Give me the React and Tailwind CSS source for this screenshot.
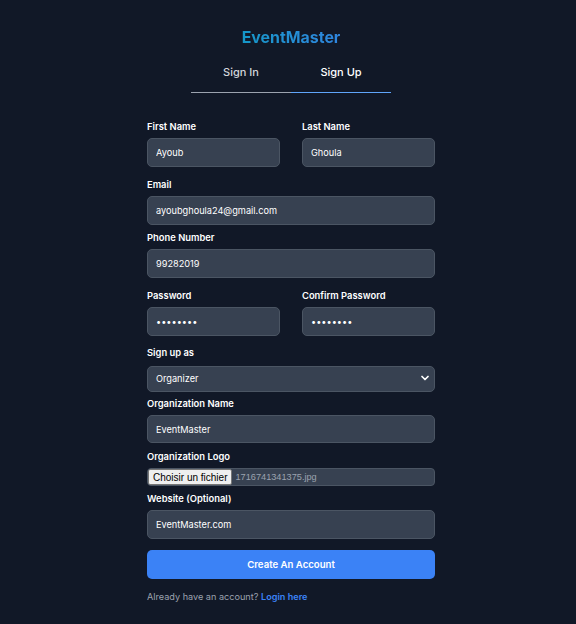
import { ChevronDown } from "lucide-react";

function Label({ children }) {
  return (
    <label className="block text-[9.4px] leading-[12px] font-semibold text-white mb-[5px]">
      {children}
    </label>
  );
}

function Field({ label, value, type = "text", className = "" }) {
  return (
    <div className={className}>
      <Label>{label}</Label>
      <input
        type={type}
        defaultValue={value}
        className="w-full h-[29px] px-[8px] rounded-[5px] bg-[#374151] border border-[#4b5563] text-white text-[9.2px] outline-none"
      />
    </div>
  );
}

export default function App() {
  return (
    <div className="min-h-screen bg-[#111827] font-['Inter',sans-serif] flex justify-center pl-[6px]">
      <div className="w-[288px] flex flex-col items-center pt-[28px]">
        <h1 className="text-[15.9px] leading-[20px] font-bold bg-gradient-to-r from-[#1497c8] to-[#2f86e0] bg-clip-text text-transparent">
          EventMaster
        </h1>

        {/* tabs */}
        <div className="flex w-[200px] mt-[16px]">
          <button className="w-1/2 text-center text-[11px] leading-[16px] font-medium text-[#d1d5db] pb-[12px] border-b border-[#9ca3af]">
            Sign In
          </button>
          <button className="w-1/2 text-center text-[11px] leading-[16px] font-medium text-white pb-[12px] border-b border-[#60a5fa]">
            Sign Up
          </button>
        </div>

        <form className="w-full mt-[28px]" onSubmit={(e) => e.preventDefault()}>
          <div className="grid grid-cols-2 gap-x-[22px]">
            <Field label="First Name" value="Ayoub" />
            <Field label="Last Name" value="Ghoula" />
          </div>

          <Field label="Email" value="ayoubghoula24@gmail.com" className="mt-[12px]" />
          <Field label="Phone Number" value="99282019" className="mt-[7px]" />

          <div className="grid grid-cols-2 gap-x-[22px] mt-[12px]">
            <Field label="Password" value="12345678" type="password" />
            <Field label="Confirm Password" value="12345678" type="password" />
          </div>

          <div className="mt-[11px]">
            <Label>Sign up as</Label>
            <div className="relative">
              <select className="w-full h-[26px] px-[8px] appearance-none rounded-[5px] bg-[#374151] border border-[#4b5563] text-white text-[9.2px] outline-none">
                <option>Organizer</option>
                <option>Attendee</option>
              </select>
              <ChevronDown
                size={12}
                strokeWidth={3.5}
                className="absolute right-[4px] top-1/2 -translate-y-1/2 text-white pointer-events-none"
              />
            </div>
          </div>

          <div className="mt-[6px]">
            <Label>Organization Name</Label>
            <input
              defaultValue="EventMaster"
              className="w-full h-[28px] px-[8px] rounded-[5px] bg-[#374151] border border-[#4b5563] text-white text-[9.2px] outline-none"
            />
          </div>

          <div className="mt-[8px]">
            <Label>Organization Logo</Label>
            <div className="flex items-center h-[18px] rounded-[4px] bg-[#374151] border border-[#4b5563] overflow-hidden">
              <span className="h-full flex items-center px-[4px] bg-[#efefef] border border-[#767676] rounded-[2px] text-[10px] text-black font-['Liberation_Sans',sans-serif]">
                Choisir un fichier
              </span>
              <span className="ml-[3px] text-[9.2px] text-[#9ca3af] font-['Liberation_Sans',sans-serif]">
                1716741341375.jpg
              </span>
            </div>
          </div>

          <Field label="Website (Optional)" value="EventMaster.com" className="mt-[7px]" />

          <button
            type="submit"
            className="w-full h-[29px] mt-[11px] rounded-[5px] bg-[#3b82f6] text-white text-[9.6px] font-semibold"
          >
            Create An Account
          </button>

          <p className="mt-[12px] text-[9.15px] leading-[12px] text-[#9ca3af]">
            Already have an account?{" "}
            <a href="#" className="text-[#3b82f6] font-semibold">
              Login here
            </a>
          </p>
        </form>
      </div>
    </div>
  );
}
